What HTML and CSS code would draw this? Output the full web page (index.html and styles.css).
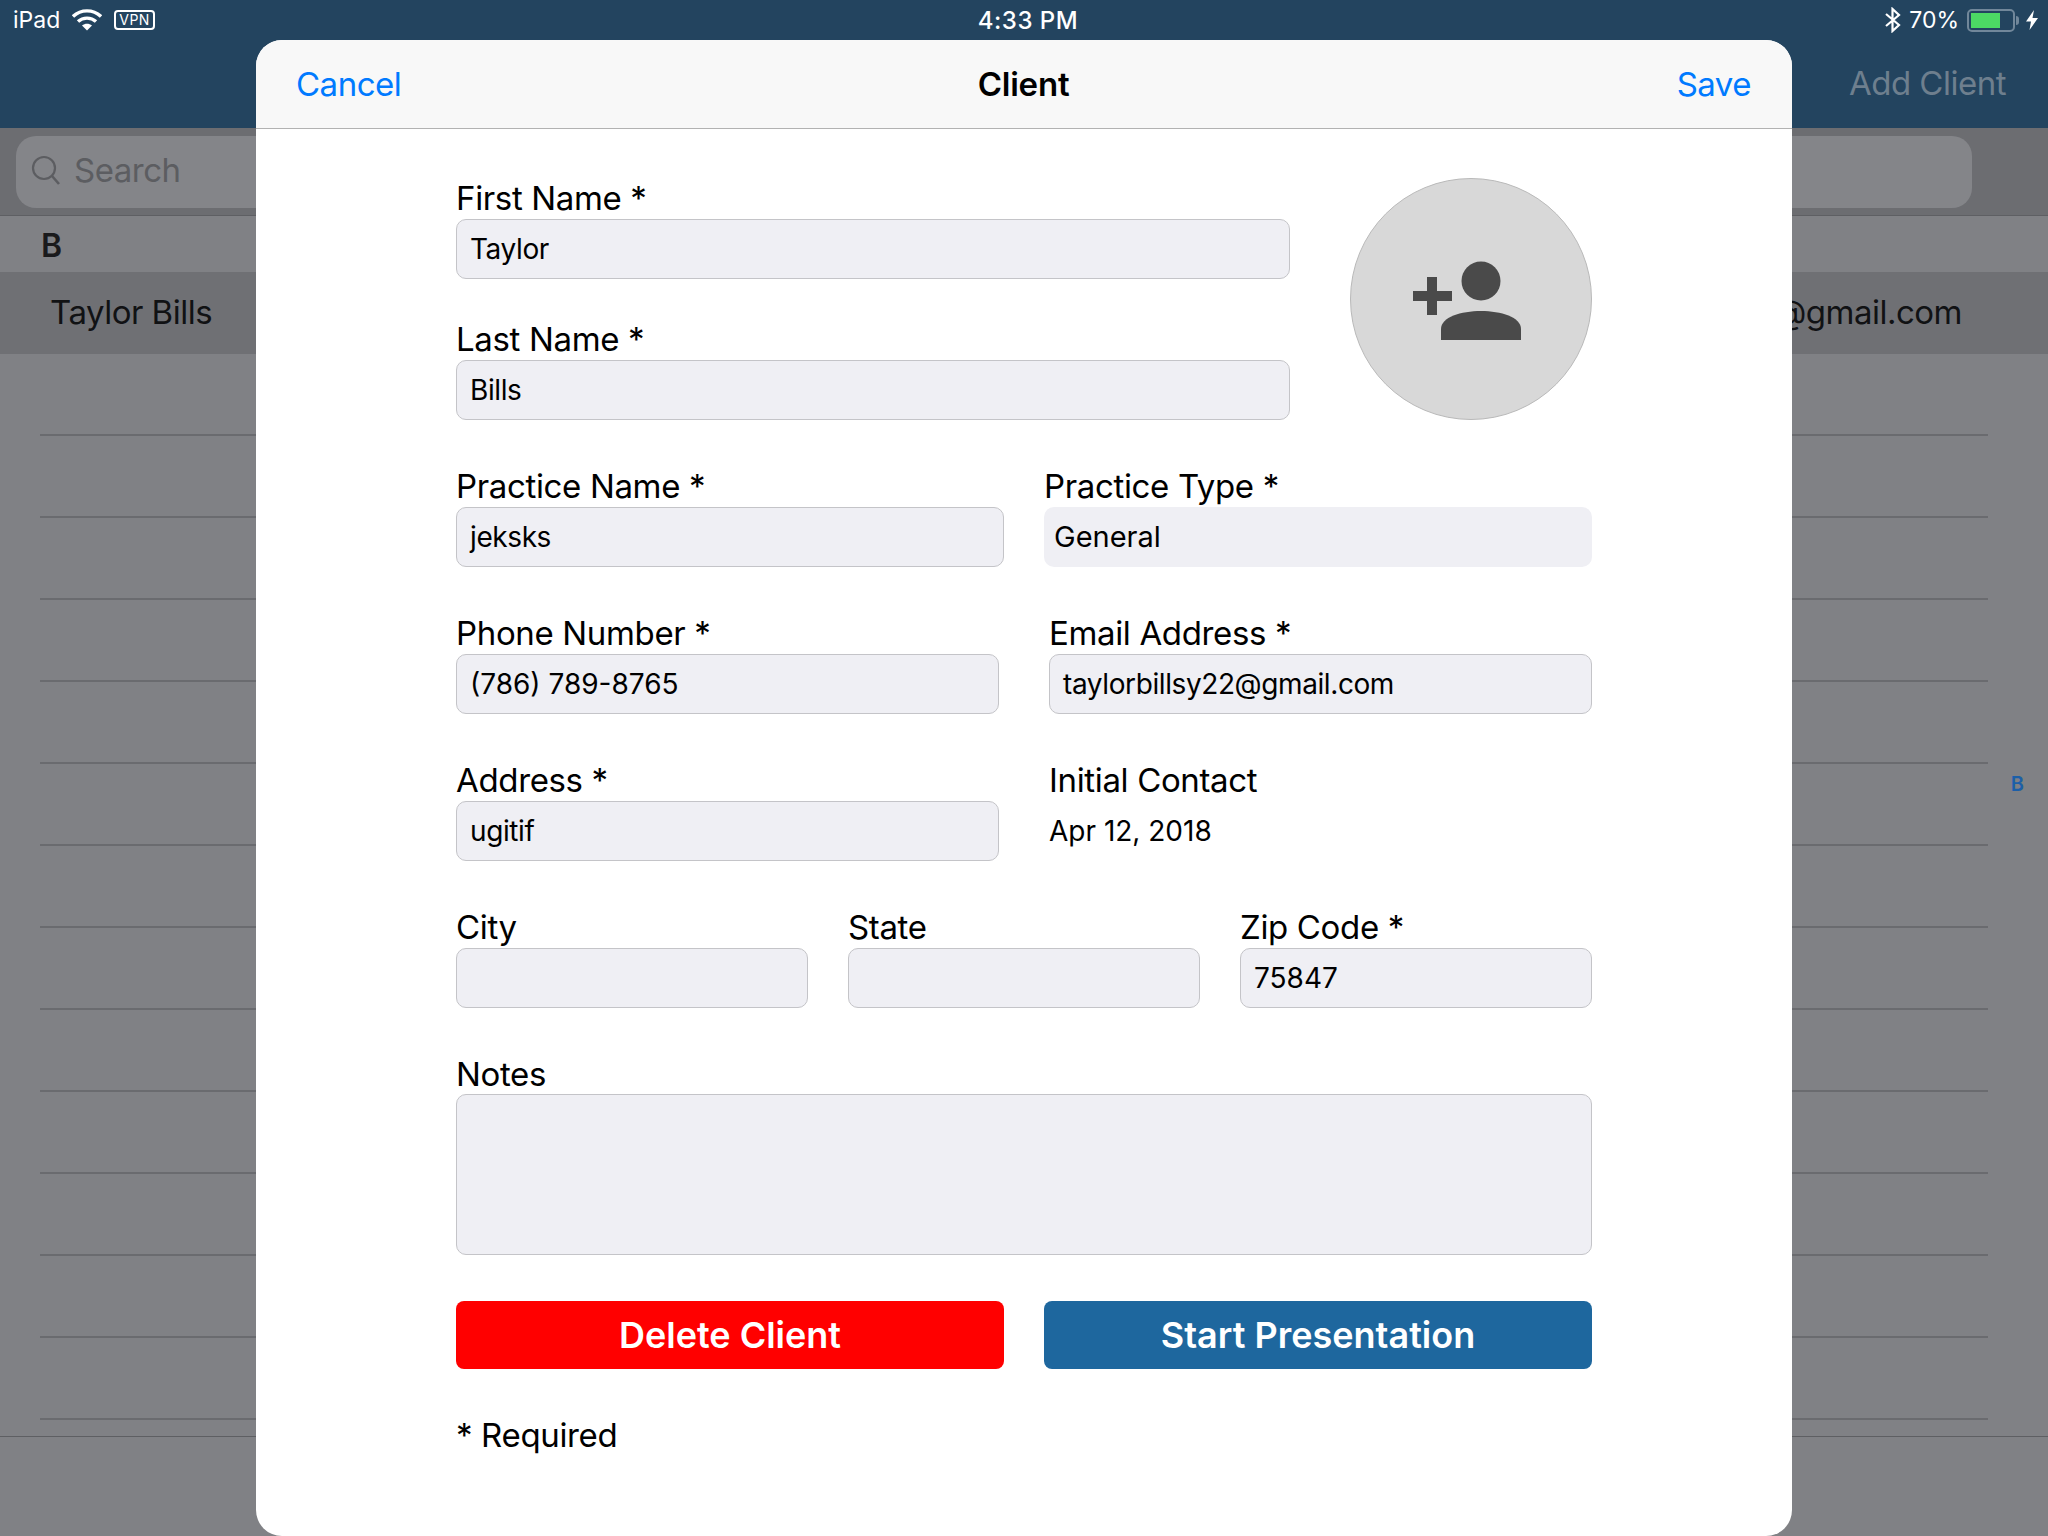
FILE: index.html
```html
<!DOCTYPE html>
<html lang="en">
<head>
    <meta charset="UTF-8">
    <title>Client</title>
    <link rel="stylesheet" href="styles.css">
</head>
<body>
    <div class="statusbar">
        <div class="status-left">
            <span>iPad</span>
            <svg class="wifi" width="30" height="22" viewBox="0 0 30 22"><path d="M1 7.5C9 0 21 0 29 7.5" fill="none" stroke="#fff" stroke-width="3.4"/><path d="M6 12.5C11 8 19 8 24 12.5" fill="none" stroke="#fff" stroke-width="3.4"/><path d="M10 16.5C13 14.2 17 14.2 20 16.5L15 21.5Z" fill="#fff"/></svg>
            <span class="vpn">VPN</span>
        </div>
        <div class="status-time">4:33 PM</div>
        <div class="status-right">
            <svg width="16" height="26" viewBox="0 0 16 26"><path d="M1 7L14 18L7.5 24V2L14 8L1 19" fill="none" stroke="#fff" stroke-width="2.2"/></svg>
            <span class="pct">70%</span>
            <span class="battery"><span class="battery-fill"></span></span>
            <span class="battery-cap"></span>
            <svg width="12" height="20" viewBox="0 0 12 20"><path d="M8 0L0 11.500H5L3.500 20L12 8H6.500Z" fill="#fff"/></svg>
        </div>
    </div>
    <div class="navbar"><span class="add-client">Add Client</span></div>
    <div class="searchbar">
        <div class="search-field">
            <svg width="32" height="32" viewBox="0 0 32 32"><circle cx="14" cy="14" r="11" fill="none" stroke="#5c5d61" stroke-width="2.2"/><path d="M22 22L29 30" stroke="#5c5d61" stroke-width="2.6"/></svg>
            <span>Search</span>
        </div>
    </div>
    <div class="section-head">B</div>
    <div class="table">
        <div class="client-row"><span>Taylor Bills</span><span>taylorbillsy22@gmail.com</span></div>
        <div class="empty-row"></div>
        <div class="empty-row"></div>
        <div class="empty-row"></div>
        <div class="empty-row"></div>
        <div class="empty-row"></div>
        <div class="empty-row"></div>
        <div class="empty-row"></div>
        <div class="empty-row"></div>
        <div class="empty-row"></div>
        <div class="empty-row"></div>
        <div class="empty-row"></div>
        <div class="empty-row"></div>
        <div class="empty-row"></div>
        <div class="index-letter">B</div>
    </div>
    <div class="tabbar"></div>

    <div class="modal">
        <div class="modal-head">
            <span class="link">Cancel</span>
            <span class="modal-title">Client</span>
            <span class="link link-right">Save</span>
        </div>
        <form class="client-form">
            <div class="top-row">
                <div class="name-col">
                    <div class="field"><label>First Name *</label><div class="input">Taylor</div></div>
                    <div class="field"><label>Last Name *</label><div class="input">Bills</div></div>
                </div>
                <div class="avatar">
                    <svg width="112" height="80" viewBox="0 0 112 80"><path d="M14 16H24V30H39V40H24V54H14V40H0V30H14Z" fill="#4a4a4a"/><circle cx="68" cy="20" r="19.500" fill="#4a4a4a"/><path d="M28 79V68C28 56 48 50 68 50C88 50 108 56 108 68V79Z" fill="#4a4a4a"/></svg>
                </div>
            </div>
            <div class="row-even">
                <div class="field"><label>Practice Name *</label><div class="input">jeksks</div></div>
                <div class="field"><label>Practice Type *</label><div class="input plain">General</div></div>
            </div>
            <div class="row-wide">
                <div class="field"><label>Phone Number *</label><div class="input digits">(786) 789-8765</div></div>
                <div class="field"><label>Email Address *</label><div class="input">taylorbillsy22@gmail.com</div></div>
            </div>
            <div class="row-wide">
                <div class="field"><label>Address *</label><div class="input">ugitif</div></div>
                <div class="field"><label>Initial Contact</label><div class="static-value">Apr 12, 2018</div></div>
            </div>
            <div class="row-three">
                <div class="field"><label>City</label><div class="input"></div></div>
                <div class="field"><label>State</label><div class="input"></div></div>
                <div class="field"><label>Zip Code *</label><div class="input digits">75847</div></div>
            </div>
            <div class="field notes-field"><label class="notes-label">Notes</label><div class="input notes"></div></div>
            <div class="row-even">
                <button type="button" class="btn btn-delete">Delete Client</button>
                <button type="button" class="btn btn-start">Start Presentation</button>
            </div>
            <div class="required-note">* Required</div>
        </form>
    </div>
</body>
</html>
```

FILE: styles.css
```css
* {
    box-sizing: border-box;
}
body {
    margin: 0;
    width: 2048px;
    height: 1536px;
    overflow: hidden;
    position: relative;
    display: flex;
    flex-direction: column;
    background-color: #808185;
    font-family: Inter, Roboto, "Liberation Sans", sans-serif;
    color: #000;
}

/* status + nav */
.statusbar {
    height: 40px;
    background-color: #23445f;
    color: #fff;
    display: grid;
    grid-template-columns: 1fr auto 1fr;
    align-items: center;
    padding: 0 10px 0 13px;
    font-size: 23px;
}
.status-left {
    display: flex;
    align-items: center;
    gap: 12px;
}
.vpn {
    border: 2px solid #fff;
    border-radius: 4px;
    font-size: 14px;
    line-height: 16px;
    height: 20px;
    padding: 0 3px;
    letter-spacing: 0.5px;
}
.status-time {
    font-size: 24px;
    font-weight: 500;
    letter-spacing: 0.5px;
    margin-left: 5px;
}
.status-right {
    display: flex;
    align-items: center;
    justify-content: flex-end;
}
.pct {
    margin-left: 8px;
}
.battery {
    width: 48px;
    height: 23px;
    margin-left: 8px;
    border: 2px solid #71879a;
    border-radius: 5px;
    padding: 2px;
    display: flex;
}
.battery-fill {
    width: 29px;
    background-color: #4cd964;
}
.battery-cap {
    width: 3px;
    height: 9px;
    margin: 0 7px 0 1px;
    background-color: #71879a;
    border-radius: 0 3px 3px 0;
}
.navbar {
    height: 88px;
    background-color: #23445f;
    display: flex;
    justify-content: flex-end;
    align-items: center;
    padding: 0 42px 2px 0;
}
.add-client {
    font-size: 33px;
    letter-spacing: -0.5px;
    color: #6e7f8e;
}

/* list behind the sheet */
.searchbar {
    height: 88px;
    padding: 8px 76px 0 16px;
    background-color: #6c6d71;
    border-bottom: 1px solid #5e5f63;
}
.search-field {
    height: 72px;
    background-color: #848589;
    border-radius: 20px;
    display: flex;
    align-items: center;
    gap: 12px;
    padding: 0 14px 4px 14px;
    font-size: 33px;
    letter-spacing: -0.5px;
    color: #5c5d61;
}
.section-head {
    height: 56px;
    padding: 2px 0 0 41px;
    display: flex;
    align-items: center;
    font-size: 32px;
    font-weight: 600;
    color: #1a1a1c;
}
.table {
    position: relative;
    height: 1165px;
    border-bottom: 1px solid #5e5f63;
}
.client-row {
    height: 82px;
    background-color: #6f7074;
    display: flex;
    justify-content: space-between;
    align-items: center;
    padding: 0 86px 2px 50px;
    font-size: 33px;
    letter-spacing: -0.5px;
    color: #111214;
}
.empty-row {
    height: 82px;
    margin: 0 60px 0 40px;
    border-bottom: 2px solid #6a6b6f;
}
.index-letter {
    position: absolute;
    right: 24px;
    top: 500px;
    font-size: 20px;
    font-weight: 600;
    color: #1c5fa8;
}

/* the sheet */
.modal {
    position: absolute;
    left: 256px;
    top: 40px;
    width: 1536px;
    height: 1496px;
    background-color: #fff;
    border-radius: 26px;
    overflow: hidden;
}
.modal-head {
    height: 89px;
    background-color: #f8f8f8;
    border-bottom: 1px solid #b2b2b2;
    display: grid;
    grid-template-columns: 1fr auto 1fr;
    align-items: center;
    padding: 0 41px 0 40px;
    font-size: 33px;
    letter-spacing: -0.5px;
}
.link {
    color: #007aff;
}
.link-right {
    text-align: right;
}
.modal-title {
    font-weight: 600;
    letter-spacing: -0.2px;
}
.client-form {
    padding: 50px 200px 0;
    display: flex;
    flex-direction: column;
    gap: 47px;
}
.top-row {
    display: flex;
    justify-content: space-between;
}
.name-col {
    width: 834px;
    display: flex;
    flex-direction: column;
    gap: 41px;
}
.avatar {
    width: 242px;
    height: 242px;
    margin-top: -1px;
    border-radius: 50%;
    background-color: #d8d8d8;
    border: 1px solid #b9b9b9;
    display: flex;
    align-items: center;
    justify-content: center;
    padding: 4px 4px 0 0;
}
.row-even {
    display: grid;
    grid-template-columns: 1fr 1fr;
    gap: 40px;
}
.row-wide {
    display: grid;
    grid-template-columns: 1fr 1fr;
    gap: 50px;
}
.row-three {
    display: grid;
    grid-template-columns: 1fr 1fr 1fr;
    gap: 40px;
    margin-bottom: -1px;
}
label {
    display: block;
    height: 40px;
    line-height: 38px;
    font-size: 33px;
    letter-spacing: -0.35px;
}
.notes-label {
    line-height: 40px;
}
.input {
    height: 60px;
    line-height: 58px;
    background-color: #efeff4;
    border: 1px solid #c4c4c8;
    border-radius: 10px;
    padding: 0 13px;
    font-size: 28px;
    letter-spacing: -0.4px;
}
.digits {
    letter-spacing: 0;
}
.plain {
    border: none;
    line-height: 60px;
    padding: 0 10px;
    font-size: 29px;
    letter-spacing: 0;
}
.notes {
    height: 161px;
}
.notes-field {
    margin-bottom: -1px;
}
.static-value {
    height: 60px;
    line-height: 60px;
    font-size: 28px;
}
.btn {
    height: 68px;
    border: none;
    border-radius: 8px;
    color: #fff;
    font-family: inherit;
    font-size: 36px;
    font-weight: 600;
}
.btn-delete {
    background-color: #ff0000;
}
.btn-start {
    background-color: #1e679e;
}
.required-note {
    height: 40px;
    line-height: 38px;
    font-size: 33px;
    letter-spacing: -0.35px;
}
```
